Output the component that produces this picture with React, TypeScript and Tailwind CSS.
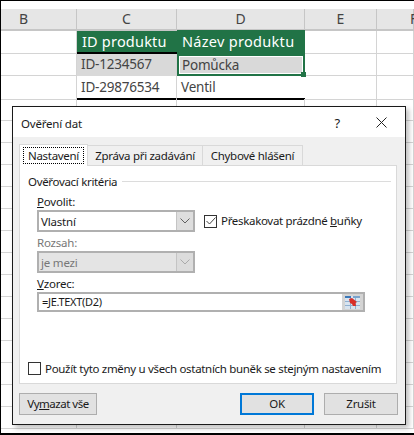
const font = { fontFamily: '"Noto Sans", sans-serif' };

function Chevron({ color = "#606060" }: { color?: string }) {
  return (
    <svg width="10" height="6" viewBox="0 0 10 6" fill="none">
      <path d="M0.5 0.5 L5 5 L9.5 0.5" stroke={color} strokeWidth="1" />
    </svg>
  );
}

function Combo({ value, disabled }: { value: string; disabled?: boolean }) {
  return (
    <div
      className={`flex h-[22px] w-[158px] border-2 border-[#b0b0b0] ${
        disabled ? "bg-[#e4e4e4] text-[#777]" : "bg-white text-[#1a1a1a]"
      }`}
    >
      <span className="flex-1 pl-[2px] text-[11.5px] leading-[19px] tracking-[-0.2px]">{value}</span>
      <span className={`flex w-[17px] items-center justify-center border-l border-[#c4c4c4] ${disabled ? "bg-[#dcdcdc]" : "bg-[#dedede]"}`}>
        <Chevron color={disabled ? "#aaaaaa" : "#606060"} />
      </span>
    </div>
  );
}

function RangeIcon() {
  return (
    <svg width="15" height="13" viewBox="0 0 15 13">
      <rect x="0" y="0" width="15" height="13" fill="#d8e4f0" />
      <rect x="0" y="0" width="6" height="2" fill="#3c78b8" />
      <rect x="8" y="0" width="7" height="2" fill="#7aa4cc" />
      <path d="M0 5.5H15M0 9.5H15M5.5 2V13M10.5 2V13" stroke="#8fb0d0" strokeWidth="1" />
      <path d="M4 3 L7 2 L12 6 L10.5 7 L11 10 L8 10 L7 8 L5 7 Z" fill="#d8302a" />
    </svg>
  );
}

function Tab({ label, width, active, focus }: { label: string; width: string; active?: boolean; focus?: boolean }) {
  return (
    <div
      className={`border border-b-0 border-[#d9d9d9] text-center text-[11.5px] tracking-[-0.3px] text-[#1a1a1a] ${width} ${
        active ? "relative z-10 -mb-px h-[22px] bg-white pt-[3px]" : "-ml-px h-[20px] self-end bg-[#f0f0f0] pt-[2px]"
      }`}
    >
      <span className={`mx-[4px] block leading-[15px] ${focus ? "outline-1 outline-dotted outline-black" : ""}`}>
        {label}
      </span>
    </div>
  );
}

function Button({ children, primary, width }: { children: React.ReactNode; primary?: boolean; width: string }) {
  return (
    <div
      className={`flex h-[22px] items-center justify-center bg-[#e1e1e1] text-[11.5px] tracking-[-0.3px] text-[#1a1a1a] ${width} ${
        primary ? "border-2 border-[#0078d7]" : "border border-[#adadad]"
      }`}
    >
      <span>{children}</span>
    </div>
  );
}

function DataValidationDialog() {
  return (
    <div className="absolute top-[105px] left-[11px] flex h-[319px] w-[394px] flex-col border border-[#1a1a1a] bg-[#f0f0f0] text-[11.5px] tracking-[-0.2px] shadow-[3px_3px_5px_rgba(0,0,0,0.25)]">
      <div className="flex h-[30px] items-center bg-white pt-[3px] pl-[8px] text-[#1a1a1a]">
        <span className="flex-1">Ověření dat</span>
        <span className="mr-[36px] text-[13px]">?</span>
        <svg className="mr-[18px] mb-[3px]" width="11" height="11" viewBox="0 0 11 11" fill="none">
          <path d="M0.5 0.5 L10.5 10.5 M10.5 0.5 L0.5 10.5" stroke="#222" strokeWidth="1" />
        </svg>
      </div>

      <div className="flex h-[28px] items-end px-[6px]">
        <Tab label="Nastavení" width="w-[69px]" active focus />
        <Tab label="Zpráva při zadávání" width="w-[116px]" />
        <Tab label="Chybové hlášení" width="w-[101px]" />
      </div>

      <div className="mx-[6px] h-[219px] w-[378px] border border-[#d9d9d9] bg-white pt-[7px] pr-[5px] pl-[8px] tracking-[-0.32px] text-[#1a1a1a]">
        <div className="flex items-center gap-[5px] leading-[17px]">
          <span>Ověřovací kritéria</span>
          <span className="h-px flex-1 bg-[#dcdcdc]" />
        </div>
        <div className="pl-[9px]">
          <div className="mt-[3px] leading-[17px] tracking-[-0.2px]">
            <span className="underline">P</span>ovolit:
          </div>
          <div className="flex items-center">
            <Combo value="Vlastní" />
            <label className="ml-[9px] flex items-center gap-[4px]">
              <span className="flex h-[13px] w-[13px] items-center justify-center border border-[#333] bg-white">
                <svg width="10" height="8" viewBox="0 0 10 8" fill="none">
                  <path d="M0.5 4 L3.5 7 L9.5 0.5" stroke="#444" strokeWidth="1" />
                </svg>
              </span>
              <span>
                Přeskakovat prázdné <span className="underline">b</span>uňky
              </span>
            </label>
          </div>
          <div className="mt-[2px] leading-[17px] tracking-[-0.2px] text-[#777]">Rozsah:</div>
          <Combo value="je mezi" disabled />
          <div className="mt-[2px] leading-[17px] tracking-[-0.2px]">
            <span className="underline">V</span>zorec:
          </div>
          <div className="flex h-[20px] w-[328px] border-2 border-[#b0b0b0]">
            <span className="flex-1 pl-[3px] text-[11px] leading-[16px] tracking-[-0.3px]">=JE.TEXT(D2)</span>
            <span className="flex w-[21px] items-center justify-center bg-[#d4d4d4]">
              <RangeIcon />
            </span>
          </div>
        </div>
        <label className="mt-[48px] flex items-center gap-[4px]">
          <span className="h-[13px] w-[13px] border border-[#333] bg-white" />
          <span>Použít tyto změny u všech ostatních buněk se stejným nastavením</span>
        </label>
      </div>

      <div className="flex px-[6px] pt-[9px]">
        <Button width="w-[78px]">
          <span className="tracking-[-0.5px]">
            Vy<span className="underline">m</span>azat vše
          </span>
        </Button>
        <div className="ml-[143px]">
          <Button primary width="w-[74px]">OK</Button>
        </div>
        <div className="ml-[10px]">
          <Button width="w-[74px]">Zrušit</Button>
        </div>
      </div>
    </div>
  );
}

const cols = "grid grid-cols-[76px_100px_128px_72px_37px]";

function SheetRow({ children, height }: { children?: React.ReactNode; height: string }) {
  return <div className={`${cols} ${height}`}>{children}</div>;
}

function Cell({ className = "", children }: { className?: string; children?: React.ReactNode }) {
  return (
    <div className={`overflow-hidden border-r border-b border-[#d4d4d4] whitespace-nowrap ${className}`}>
      {children}
    </div>
  );
}

const headCell = "border-r border-b-2 border-[#c6c6c6] bg-[#e6e6e6] text-center text-[14px] leading-[20px] text-[#444]";

export default function App() {
  const emptyRows = Array.from({ length: 15 });
  return (
    <div
      className="relative h-[435px] w-[414px] overflow-hidden border-t border-b-2 border-l border-black bg-white"
      style={font}
    >
      <div className="h-[8px]" />
      <SheetRow height="h-[22px]">
        <div className={`${headCell} pr-[30px]`}>B</div>
        <div className={headCell}>C</div>
        <div className={`${headCell} border-[#b0b0b0] bg-[#d2d2d2]`}>D</div>
        <div className={headCell}>E</div>
        <div className={`${headCell} pl-[33px] text-left`}>F</div>
      </SheetRow>
      <SheetRow height="h-[23px]">
        <Cell />
        <div className="border-b-2 border-black bg-[#217346] pl-[5px] text-[14.5px] leading-[20px] tracking-[0.2px] whitespace-nowrap text-white">
          ID produktu
        </div>
        <div className="-mt-px bg-[#217346] pl-[5px] text-[14.5px] leading-[22px] tracking-[0.3px] whitespace-nowrap text-white">
          Název produktu
        </div>
        <Cell />
        <Cell />
      </SheetRow>
      <SheetRow height="h-[22px]">
        <Cell />
        <div className="border-r border-[#d4d4d4] bg-[#d9d9d9] pl-[4px] text-[13.5px] leading-[21px] tracking-[-0.2px] whitespace-nowrap text-[#444]">
          ID-1234567
        </div>
        <div className="relative border-2 border-[#217346] bg-[#d9d9d9] text-[13.5px] tracking-[-0.2px] text-[#444] outline-1 -outline-offset-3 outline-white">
          <span className="block pl-[3px] leading-[18px]">Pomůcka</span>
          <span className="absolute -right-[3px] -bottom-[3px] h-[5px] w-[5px] bg-[#217346]" />
        </div>
        <Cell />
        <Cell />
      </SheetRow>
      <SheetRow height="h-[23px]">
        <Cell />
        <div className="border-r border-b-2 border-[#d4d4d4] border-b-black pl-[4px] text-[13.5px] leading-[22px] tracking-[-0.2px] whitespace-nowrap text-[#444]">
          ID-29876534
        </div>
        <div className="border-b-2 border-black pl-[4px] text-[13.5px] leading-[22px] tracking-[-0.2px] whitespace-nowrap text-[#444]">
          Ventil
        </div>
        <Cell />
        <Cell />
      </SheetRow>
      {emptyRows.map((_, i) => (
        <SheetRow key={i} height="h-[22px]">
          <Cell />
          <Cell />
          <Cell />
          <Cell />
          <Cell />
        </SheetRow>
      ))}
      <DataValidationDialog />
    </div>
  );
}
